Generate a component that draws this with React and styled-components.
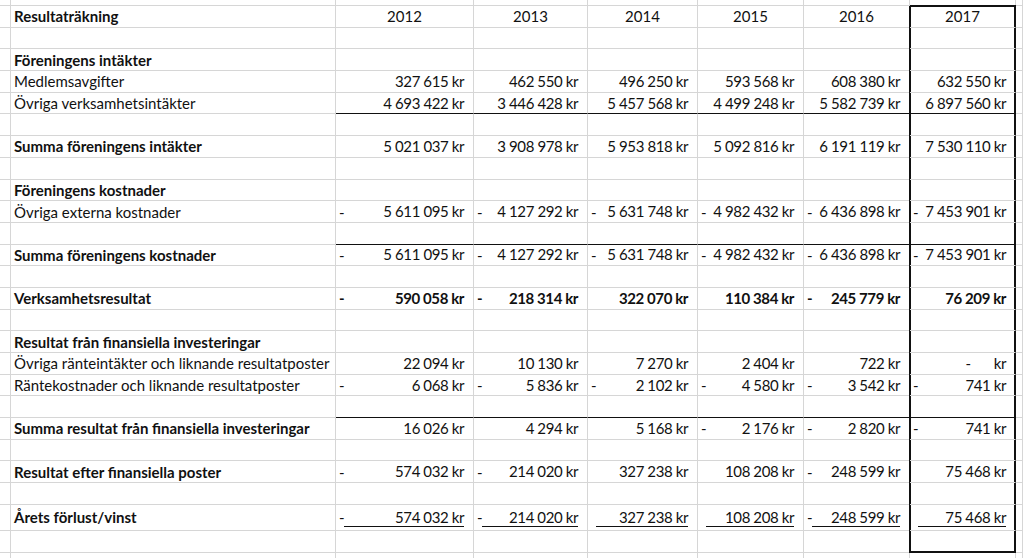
import styled, { createGlobalStyle } from "styled-components";

const GRID = "#d6d6d6";
const INK = "#111";

const GlobalStyle = createGlobalStyle`
  html, body {
    margin: 0;
    padding: 0;
    background: #fff;
  }
  body {
    font-family: Lato, "Open Sans", sans-serif;
    color: #000;
    overflow: hidden;
  }
`;

const years = [2012, 2013, 2014, 2015, 2016, 2017];

const rows = [
  { label: "Resultaträkning", bold: true, header: true },
  {},
  { label: "Föreningens intäkter", bold: true },
  {
    label: "Medlemsavgifter",
    values: [327615, 462550, 496250, 593568, 608380, 632550],
  },
  {
    label: "Övriga verksamhetsintäkter",
    values: [4693422, 3446428, 5457568, 4499248, 5582739, 6897560],
    rule: true,
  },
  {},
  {
    label: "Summa föreningens intäkter",
    bold: true,
    values: [5021037, 3908978, 5953818, 5092816, 6191119, 7530110],
  },
  {},
  { label: "Föreningens kostnader", bold: true },
  {
    label: "Övriga externa kostnader",
    values: [-5611095, -4127292, -5631748, -4982432, -6436898, -7453901],
  },
  { rule: true },
  {
    label: "Summa föreningens kostnader",
    bold: true,
    values: [-5611095, -4127292, -5631748, -4982432, -6436898, -7453901],
  },
  {},
  {
    label: "Verksamhetsresultat",
    bold: true,
    boldValues: true,
    values: [-590058, -218314, 322070, 110384, -245779, 76209],
  },
  {},
  { label: "Resultat från finansiella investeringar", bold: true },
  {
    label: "Övriga ränteintäkter och liknande resultatposter",
    values: [22094, 10130, 7270, 2404, 722, 0],
  },
  {
    label: "Räntekostnader och liknande resultatposter",
    values: [-6068, -5836, -2102, -4580, -3542, -741],
  },
  { rule: true },
  {
    label: "Summa resultat från finansiella investeringar",
    bold: true,
    values: [16026, 4294, 5168, -2176, -2820, -741],
  },
  {},
  {
    label: "Resultat efter finansiella poster",
    bold: true,
    values: [-574032, -214020, 327238, 108208, -248599, 75468],
  },
  {},
  {
    label: "Årets förlust/vinst",
    bold: true,
    underline: true,
    height: 26,
    values: [-574032, -214020, 327238, 108208, -248599, 75468],
  },
  { height: 22, boxEnd: true },
];

const Sheet = styled.div`
  display: flex;
  flex-direction: column;
  width: 1023px;
  height: 558px;
  overflow: hidden;
  background: #fff;
`;

const Row = styled.div`
  display: grid;
  grid-template-columns: 11px 325px 138px 114px 110px 106px 106px 106px 1fr;
  height: ${(p) => p.$h}px;
  flex: none;
`;

const boxShadow = (p) => {
  if (!p.$box) return "none";
  const s = ["-1px 0 0 " + INK, "inset 1px 0 0 " + INK, "inset -1px 0 0 " + INK];
  if (p.$boxTop) s.push("0 -1px 0 " + INK, "inset 0 1px 0 " + INK);
  if (p.$boxBottom) s.push("inset 0 -1px 0 " + INK);
  return s.join(", ");
};

const Cell = styled.div`
  box-sizing: border-box;
  display: flex;
  align-items: center;
  min-width: 0;
  border-right: 1px solid ${(p) => (p.$box ? INK : GRID)};
  border-bottom: 1px solid
    ${(p) => (p.$rule || (p.$box && p.$boxBottom) ? INK : GRID)};
  box-shadow: ${boxShadow};
  font-size: 15px;
  line-height: 18px;
  white-space: nowrap;
  font-weight: ${(p) => (p.$bold ? 700 : 400)};
`;

const LabelCell = styled(Cell)`
  padding-left: 3px;
  color: #111;
`;

const YearCell = styled(Cell)`
  justify-content: center;
  color: #111;
`;

const ValueCell = styled(Cell)`
  padding-left: 3px;
  color: #111;
  letter-spacing: -0.4px;
`;

const Minus = styled.span`
  flex: none;
  width: 5px;
`;

const Amount = styled.span`
  flex: 1;
  min-width: 0;
  display: flex;
  justify-content: flex-end;
  margin-right: 9px;
  border-bottom: 1px solid ${(p) => (p.$underline ? INK : "transparent")};
`;

const Nil = styled.span`
  margin-right: 23px;
`;

const group = (n) =>
  Math.abs(n)
    .toString()
    .replace(/\B(?=(\d{3})+(?!\d))/g, " ");

const Value = ({ n, underline }) => (
  <>
    <Minus>{n < 0 ? "-" : ""}</Minus>
    <Amount $underline={underline}>
      {n === 0 ? (
        <>
          <Nil>-</Nil>
          <span>kr</span>
        </>
      ) : (
        <span>{`${group(n)} kr`}</span>
      )}
    </Amount>
  </>
);

const SheetRow = ({ row, h, boxTop, inBox = true }) => (
  <Row $h={h}>
    <Cell />
    <LabelCell $bold={row.bold}>{row.label}</LabelCell>
    {years.map((y, i) => {
      const box = inBox && i === years.length - 1;
      const common = {
        $rule: row.rule,
        $box: box,
        $boxTop: box && boxTop,
        $boxBottom: box && row.boxEnd,
      };
      if (row.header) {
        return (
          <YearCell key={y} {...common}>
            {y}
          </YearCell>
        );
      }
      return (
        <ValueCell key={y} $bold={row.boldValues} {...common}>
          {row.values && <Value n={row.values[i]} underline={row.underline} />}
        </ValueCell>
      );
    })}
    <Cell />
  </Row>
);

export default function App() {
  return (
    <>
      <GlobalStyle />
      <Sheet>
        <SheetRow row={{}} h={6} inBox={false} />
        {rows.map((row, i) => (
          <SheetRow key={i} row={row} h={row.height || 21.7} boxTop={i === 0} />
        ))}
        <SheetRow row={{}} h={22} inBox={false} />
      </Sheet>
    </>
  );
}
